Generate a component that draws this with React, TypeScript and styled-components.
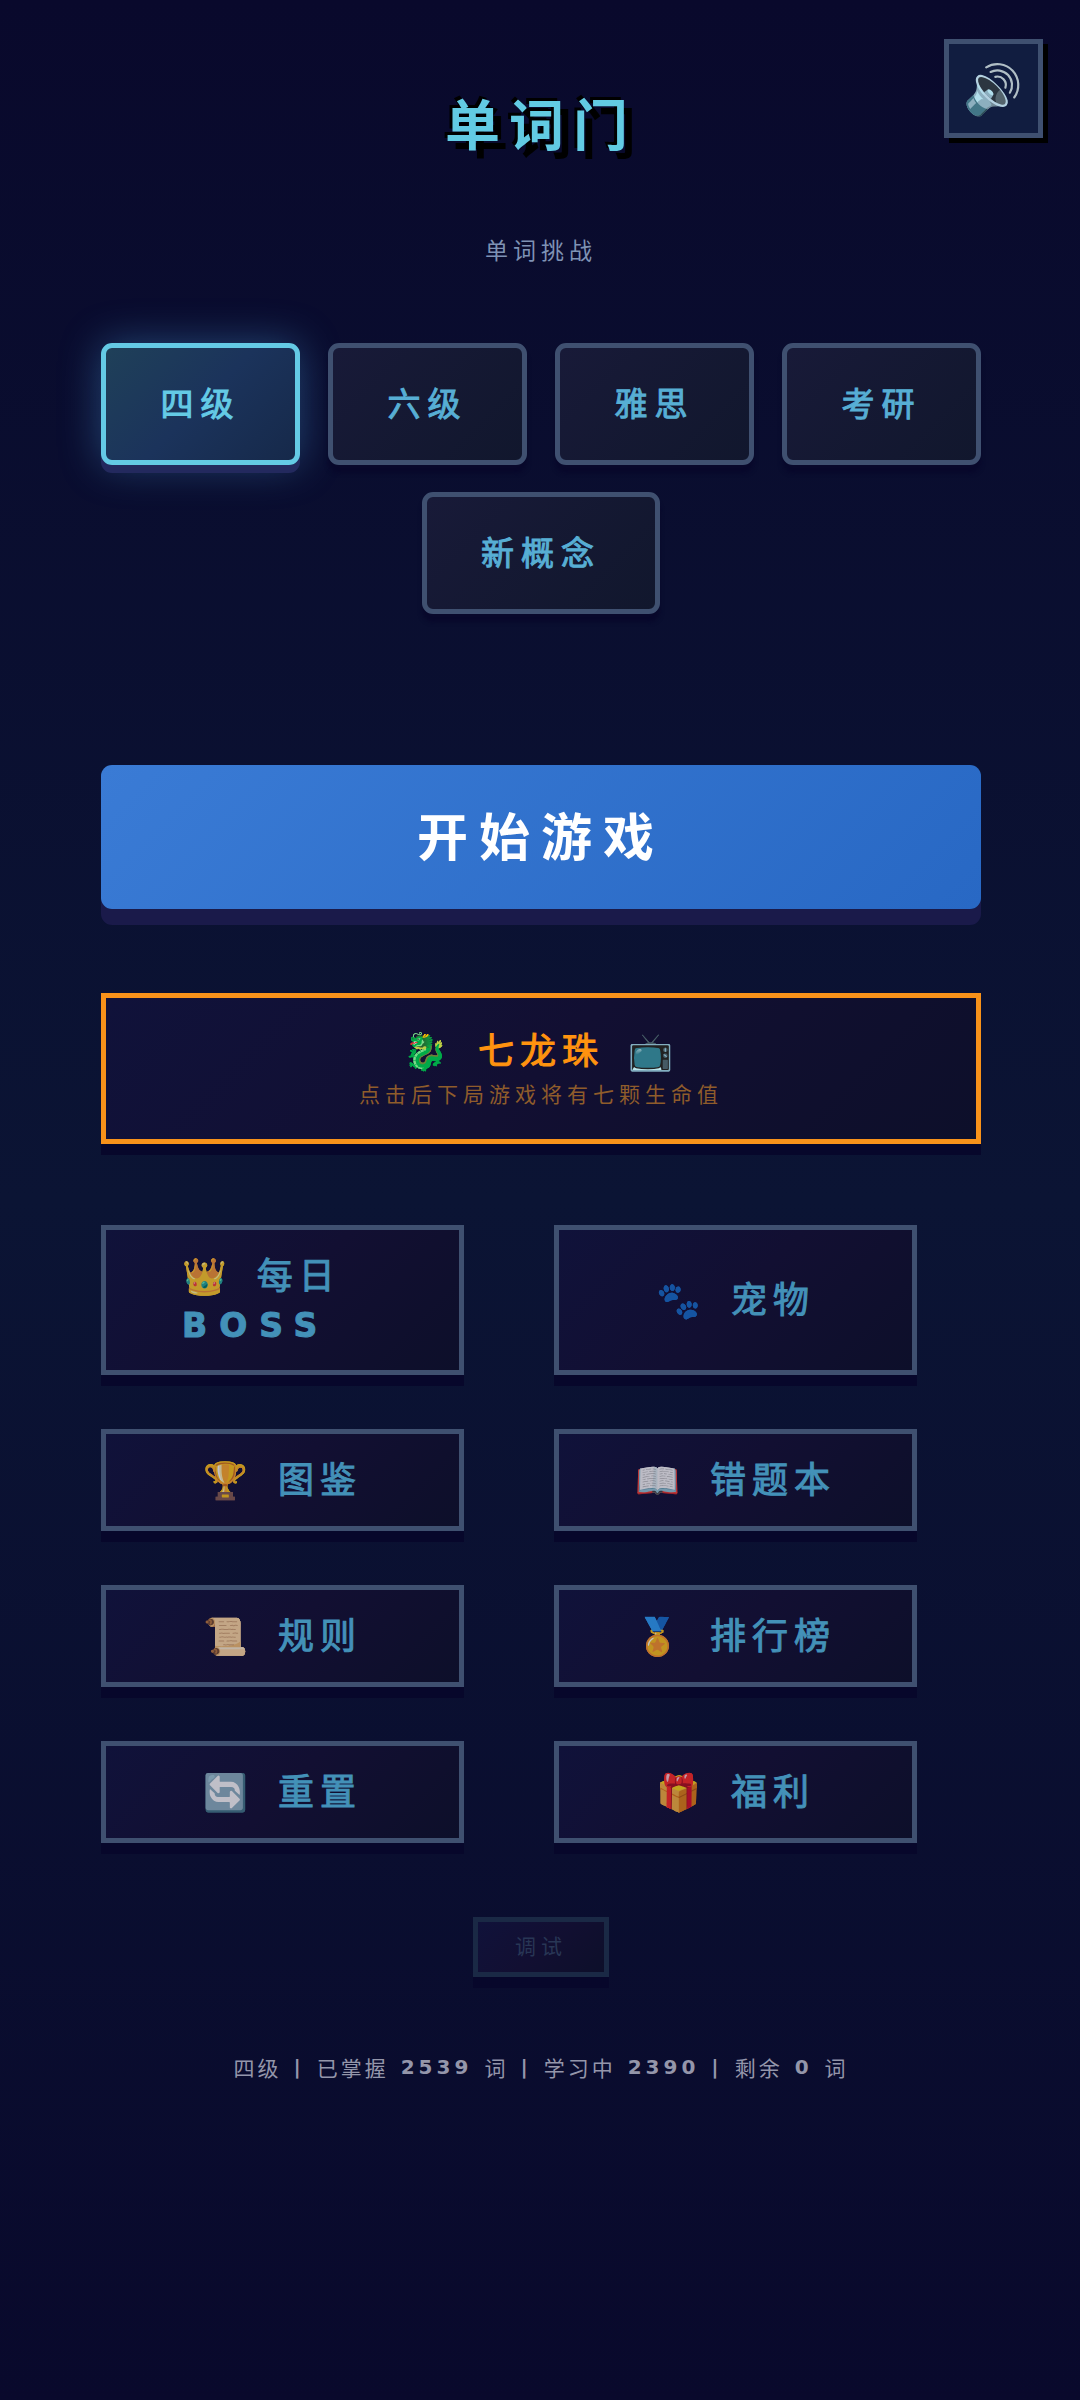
import React, { useState } from "react";
import styled, { createGlobalStyle, css } from "styled-components";

const cjk = `"Noto Sans CJK SC", "Noto Color Emoji", sans-serif`;
const latin = `"DejaVu Sans", sans-serif`;

const GlobalStyle = createGlobalStyle`
  * { box-sizing: border-box; }
  html { background: #09092c; }
  body { margin: 0; }
  button { font: inherit; color: inherit; cursor: pointer; }
`;

const mediumWeight = css`
  font-weight: 400;
  -webkit-text-stroke: 1px currentColor;
`;

const Page = styled.main`
  position: relative;
  min-height: 100vh;
  padding: 88px 99px 0 101px;
  display: flex;
  flex-direction: column;
  align-items: stretch;
  font-family: ${cjk};
  background: linear-gradient(180deg, #09092c 0%, #0b1434 50%, #09092c 100%);
`;

const SoundButton = styled.button`
  position: absolute;
  top: 39px;
  right: 37px;
  width: 99px;
  height: 99px;
  padding: 0 0 8px;
  display: grid;
  place-items: center;
  border: 5px solid #3f5070;
  background: #111d40;
  box-shadow: 5px 5px 0 #000;
`;

const Title = styled.h1`
  margin: 0;
  text-align: center;
  font-size: 55px;
  line-height: 66px;
  font-weight: 700;
  letter-spacing: 9px;
  color: #62cbe3;
  text-shadow: -3px -3px 0 #000, 8px 8px 0 #000;
`;

const Subtitle = styled.p`
  margin: 79px 0 0;
  text-align: center;
  font-size: 23px;
  line-height: 32px;
  letter-spacing: 5px;
  color: #7e92b4;
`;

const Categories = styled.div`
  margin-top: 78px;
  display: flex;
  flex-wrap: wrap;
  justify-content: center;
  gap: 27px 28px;
`;

const CategoryButton = styled.button<{ $active: boolean }>`
  min-width: 199px;
  height: 122px;
  padding: 0 54px 4px;
  border: 5px solid #3f5070;
  border-radius: 11px;
  font-size: 33px;
  ${mediumWeight}
  letter-spacing: 7px;
  color: #57aed4;
  background: linear-gradient(135deg, #181a38, #11172d);
  box-shadow: 0 8px 4px #08082b;
  ${(p) =>
    p.$active &&
    css`
      border-color: #64cae5;
      color: #64cae5;
      background: linear-gradient(135deg, #1f4059, #1b335b 50%, #16294a);
      box-shadow: 0 8px 0 #23295e, 0 0 40px rgba(74, 158, 220, 0.4);
    `}
`;

const StartButton = styled.button`
  margin-top: 151px;
  height: 144px;
  padding: 0 0 6px;
  border: 0;
  border-radius: 11px;
  font-size: 51px;
  font-weight: 700;
  letter-spacing: 11px;
  color: #fff;
  background: linear-gradient(135deg, #3a7bd5, #2868c4);
  box-shadow: 0 16px 0 #1a1a4a;
`;

const PanelButton = styled.button`
  border: 5px solid #3f5070;
  background: linear-gradient(135deg, #10123a, #120f32 50%, #0d0f2a);
  box-shadow: 0 11px 0 #07072b;
`;

const DragonButton = styled(PanelButton)`
  margin-top: 84px;
  padding: 26px 29px 32px;
  display: flex;
  flex-direction: column;
  align-items: center;
  gap: 7px;
  border-color: #f8921a;
`;

const DragonTitle = styled.span`
  display: flex;
  align-items: center;
  gap: 24px;
  font-size: 36px;
  line-height: 48px;
  ${mediumWeight}
  letter-spacing: 6px;
  color: #ff930f;
`;

const DragonNote = styled.span`
  font-size: 21px;
  line-height: 28px;
  letter-spacing: 5px;
  color: #8f5c2b;
`;

const Menu = styled.nav`
  margin: 81px 64px 0 0;
  display: grid;
  grid-template-columns: 1fr 1fr;
  gap: 54px 90px;
`;

const MenuButton = styled(PanelButton)`
  padding: 19px 76px 25px;
  display: flex;
  align-items: center;
  justify-content: center;
`;

const MenuLabel = styled.span`
  text-align: left;
  font-size: 36px;
  line-height: 48px;
  ${mediumWeight}
  letter-spacing: 6px;
  color: #4391b8;
`;

const MenuIcon = styled.span`
  margin-right: 24px;
  opacity: 0.75;
`;

const Latin = styled.span`
  font-family: ${latin};
  font-size: 33px;
  line-height: 1;
  font-weight: 700;
  letter-spacing: 12px;
`;

const SoundIcon = styled.span`
  font-size: 48px;
  line-height: 64px;
`;

const DebugButton = styled(PanelButton)`
  align-self: center;
  margin-top: 74px;
  height: 60px;
  padding: 0 37px 4px;
  border-color: #1a2945;
  font-size: 21px;
  letter-spacing: 5px;
  color: #283655;
`;

const Stats = styled.p`
  margin: 74px 0 0;
  display: flex;
  flex-wrap: wrap;
  justify-content: center;
  gap: 12px;
  font-size: 21px;
  line-height: 32px;
  letter-spacing: 3px;
  color: #9496aa;
`;

const Count = styled.span`
  font-family: ${latin};
  font-size: 20px;
  font-weight: 700;
  letter-spacing: 4px;
`;

const categories = ["四级", "六级", "雅思", "考研", "新概念"];

const menu = [
  { icon: "👑", text: "每日", latin: "BOSS" },
  { icon: "🐾", text: "宠物" },
  { icon: "🏆", text: "图鉴" },
  { icon: "📖", text: "错题本" },
  { icon: "📜", text: "规则" },
  { icon: "🏅", text: "排行榜" },
  { icon: "🔄", text: "重置" },
  { icon: "🎁", text: "福利" },
];

export default function App() {
  const [active, setActive] = useState("四级");
  return (
    <>
      <GlobalStyle />
      <Page>
        <SoundButton type="button" aria-label="声音">
          <SoundIcon>🔊</SoundIcon>
        </SoundButton>
        <Title>单词门</Title>
        <Subtitle>单词挑战</Subtitle>
        <Categories>
          {categories.map((c) => (
            <CategoryButton key={c} type="button" $active={c === active} aria-pressed={c === active} onClick={() => setActive(c)}>
              {c}
            </CategoryButton>
          ))}
        </Categories>
        <StartButton type="button">开始游戏</StartButton>
        <DragonButton type="button">
          <DragonTitle>
            <span>🐉</span>
            <span>七龙珠</span>
            <span>📺</span>
          </DragonTitle>
          <DragonNote>点击后下局游戏将有七颗生命值</DragonNote>
        </DragonButton>
        <Menu>
          {menu.map((m) => (
            <MenuButton key={m.text} type="button">
              <MenuLabel>
                <MenuIcon>{m.icon}</MenuIcon>
                {m.text}
                {m.latin && <Latin> {m.latin}</Latin>}
              </MenuLabel>
            </MenuButton>
          ))}
        </Menu>
        <DebugButton type="button">调试</DebugButton>
        <Stats>
          <span>{active}</span>
          <Count>|</Count>
          <span>已掌握</span>
          <Count>2539</Count>
          <span>词</span>
          <Count>|</Count>
          <span>学习中</span>
          <Count>2390</Count>
          <Count>|</Count>
          <span>剩余</span>
          <Count>0</Count>
          <span>词</span>
        </Stats>
      </Page>
    </>
  );
}
